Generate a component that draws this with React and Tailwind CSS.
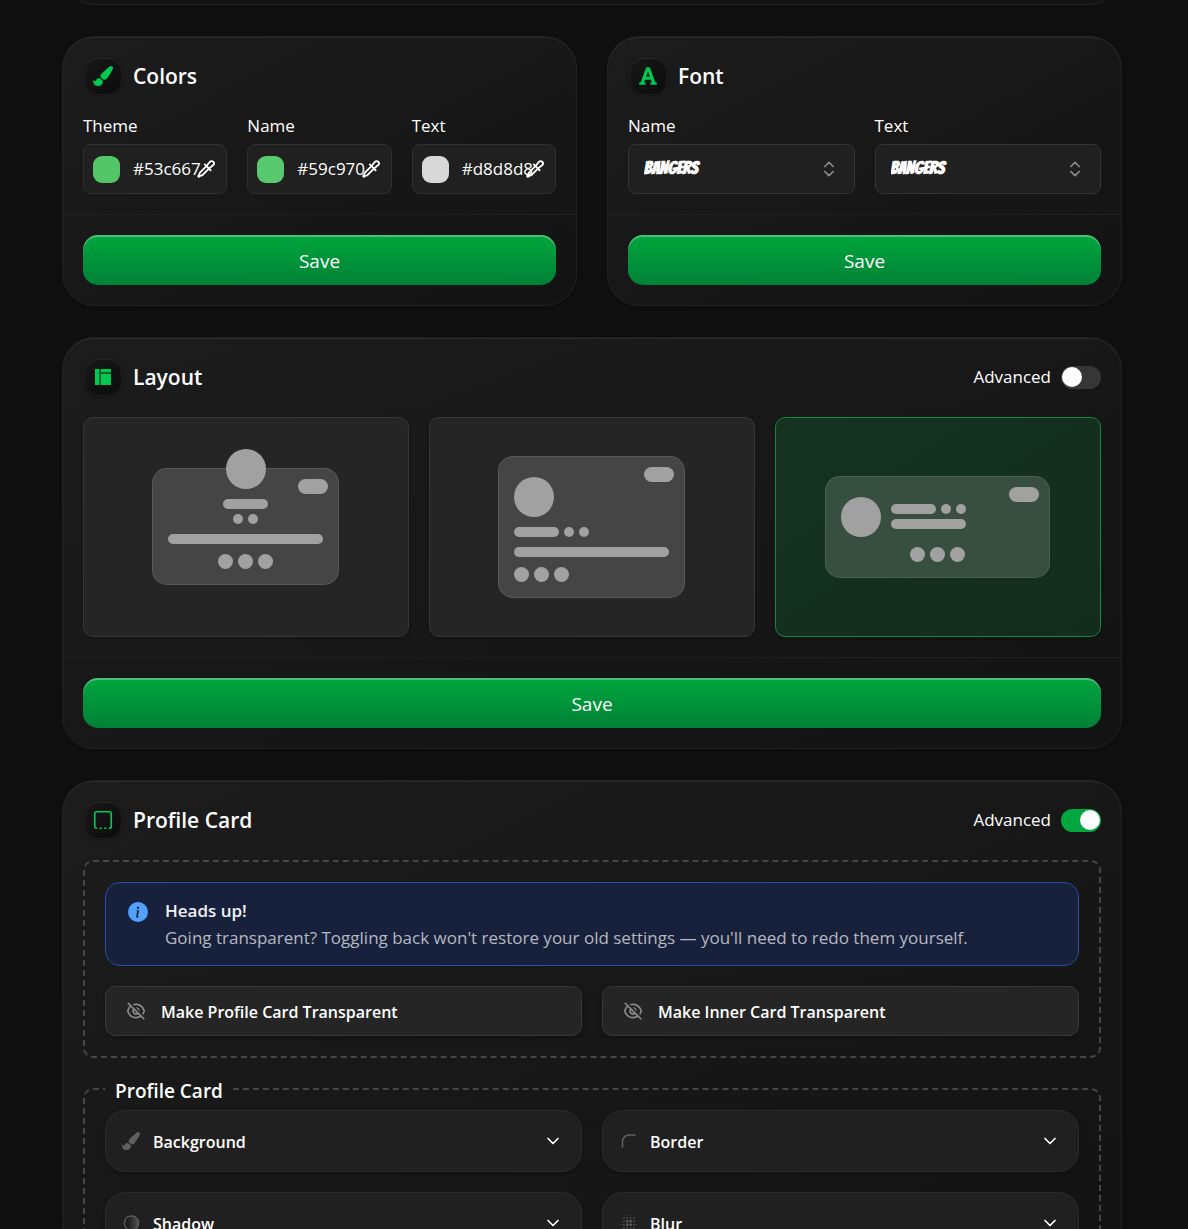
import { useState } from "react";
import { ChevronDown, ChevronsUpDown, SquareDashedBottom } from "lucide-react";
import { FaPaintBrush, FaFont } from "react-icons/fa";
import { BsInfoCircleFill } from "react-icons/bs";
import { MdBlurOn } from "react-icons/md";
import { RiEyeOffLine } from "react-icons/ri";

function LayoutIcon() {
  return (
    <svg width="16" height="16" viewBox="0 0 16 16" fill="currentColor" aria-hidden="true">
      <rect width="16" height="16" opacity="0.45" />
      <rect width="4" height="16" />
      <rect x="6" width="10" height="3" />
      <rect x="6" y="5" width="10" height="11" />
    </svg>
  );
}

function EyedropperIcon() {
  return (
    <svg
      width="20"
      height="20"
      viewBox="0 0 24 24"
      fill="none"
      stroke="currentColor"
      strokeWidth="2.2"
      strokeLinecap="round"
      strokeLinejoin="round"
      aria-hidden="true"
    >
      <path d="M12.500 8.500 5 16c-1 1-.8 2-1.200 3L2.500 20.500l1 1L5 20.200c1-.4 2-.2 3-1.200l7.500-7.500" />
      <path d="M10.500 6.500l7 7" />
      <path d="M12.500 8.500l4.300-5.200a2.700 2.700 0 0 1 3.900 3.900l-5.200 4.300" />
    </svg>
  );
}

function CornerIcon() {
  return (
    <svg width="18" height="18" viewBox="0 0 18 18" fill="none" stroke="currentColor" strokeWidth="1.5" aria-hidden="true">
      <path d="M3.500 15.500v-6a6.500 6.500 0 0 1 6.500-6.500h6.500" />
    </svg>
  );
}

function ShadowIcon() {
  return (
    <svg width="18" height="18" viewBox="0 0 18 18" aria-hidden="true">
      <defs>
        <linearGradient id="shade" x1="0" x2="1">
          <stop offset="0.3" stopColor="currentColor" stopOpacity="0" />
          <stop offset="1" stopColor="currentColor" stopOpacity="0.8" />
        </linearGradient>
      </defs>
      <circle cx="9.500" cy="9" r="7.2" fill="url(#shade)" stroke="currentColor" strokeWidth="1.2" />
    </svg>
  );
}

function Panel({ icon, title, advanced, children, footer }) {
  return (
    <section className="rounded-[32px] border border-[#222222] bg-linear-to-br from-[#1c1c1c] to-[#131313] shadow-[inset_0_1px_1px_rgba(255,255,255,0.08),0_2px_6px_rgba(0,0,0,0.3)]">
      <div className="p-5">
        <header className="flex h-[39px] items-start justify-between">
          <div className="flex items-center gap-[11px] pl-px">
            <span className="flex size-[38px] items-center justify-center rounded-[14px] border border-[#1e1e1e] bg-linear-to-br from-[#191919] to-[#0b0b0b] text-[#00c951] shadow-[inset_0_1px_1px_rgba(255,255,255,0.08),0_1px_3px_rgba(0,0,0,0.3)]">
              {icon}
            </span>
            <h2 className="text-[21px] leading-8 font-semibold">{title}</h2>
          </div>
          {advanced !== undefined && <Toggle initial={advanced} />}
        </header>
        {children}
      </div>
      {footer && (
        <div className="border-t border-[#202020] p-5">
          <button
            type="button"
            className="h-[50px] w-full rounded-[15px] bg-linear-to-b from-[#00a63e] to-[#008236] pt-0.5 text-[19px] font-medium shadow-[inset_0_2px_0_rgba(255,255,255,0.3)]"
          >
            Save
          </button>
        </div>
      )}
    </section>
  );
}

function Toggle({ initial }) {
  const [on, setOn] = useState(initial);
  return (
    <label className="flex h-[38px] items-center gap-2.5 text-[17px]">
      Advanced
      <input
        type="checkbox"
        role="switch"
        checked={on}
        onChange={(e) => setOn(e.target.checked)}
        className="flex h-[23px] w-10 appearance-none items-center rounded-full bg-[#363636] px-px before:size-5 before:rounded-full before:bg-white checked:justify-end checked:bg-[#00a63e]"
      />
    </label>
  );
}

function ColorField({ id, label, value, swatch }) {
  return (
    <div className="min-w-0 flex-1">
      <label htmlFor={id} className="block text-[17px] leading-[26px]">
        {label}
      </label>
      <div className="relative mt-[5px] flex h-[50px] items-center gap-[13px] rounded-lg border border-[#303030] bg-[#202020] pl-[9px]">
        <button type="button" aria-label={`Pick ${label} color`} className={`size-[27px] shrink-0 rounded-[9px] ${swatch}`} />
        <input id={id} type="text" defaultValue={value} className="w-full min-w-0 bg-transparent text-[17px] outline-none" />
        <button type="button" aria-label={`Sample ${label} color`} className="absolute right-2.5">
          <EyedropperIcon />
        </button>
      </div>
    </div>
  );
}

function FontField({ id, label }) {
  return (
    <div className="min-w-0 flex-1">
      <label htmlFor={id} className="block text-[17px] leading-[26px]">
        {label}
      </label>
      <div className="relative mt-[5px] flex items-center">
        <select
          id={id}
          className="h-[50px] w-full appearance-none rounded-lg border border-[#343434] bg-[#202020] px-[15px] pb-1 font-['Bangers','Liberation_Sans_Narrow','Roboto',sans-serif] text-[18px] font-bold"
        >
          <option>BANGERS</option>
        </select>
        <ChevronsUpDown size={20} className="pointer-events-none absolute right-4 text-[#8c8c8c]" />
      </div>
    </div>
  );
}

function Bar({ className }) {
  return <span className={`block shrink-0 rounded-full bg-[#a1a1a1] ${className}`} />;
}

function Trio() {
  return (
    <span className="flex gap-[5px]">
      <Bar className="size-[15px]" />
      <Bar className="size-[15px]" />
      <Bar className="size-[15px]" />
    </span>
  );
}

function Duo() {
  return (
    <span className="flex gap-[5px]">
      <Bar className="size-2.5" />
      <Bar className="size-2.5" />
    </span>
  );
}

function LayoutOption({ label, selected, onSelect, width, children }) {
  return (
    <button
      type="button"
      aria-label={label}
      aria-pressed={selected}
      onClick={onSelect}
      className={`flex h-[220px] min-w-0 flex-1 items-center justify-center rounded-[10px] border pr-px pb-px shadow-[0_1px_3px_rgba(0,0,0,0.3)] ${
        selected ? "border-[#0c8a3e] bg-linear-to-br from-[#153320] to-[#132c1e]" : "border-[#373737] bg-[#252525]"
      }`}
    >
      <span className={`relative flex flex-col rounded-[15px] border border-white/10 bg-white/15 p-[15px] ${width}`}>
        <Bar className="absolute top-2.5 right-2.5 h-[15px] w-[30px]" />
        {children}
      </span>
    </button>
  );
}

function TransparentButton({ children }) {
  return (
    <button
      type="button"
      className="flex h-[50px] items-center gap-[15px] rounded-[10px] border border-[#383838] bg-[#252525] px-5 text-[16px] font-semibold shadow-[0_2px_4px_rgba(0,0,0,0.3)]"
    >
      <RiEyeOffLine size={20} className="text-[#8c8c8c]" />
      <span className="pt-0.5">{children}</span>
    </button>
  );
}

function Accordion({ icon, title }) {
  return (
    <button
      type="button"
      aria-expanded="false"
      className="flex h-[62px] items-center rounded-[20px] border border-[#2b2b2b] bg-[#202020] pr-[18px] pl-4 text-[16px] font-semibold shadow-[0_2px_4px_rgba(0,0,0,0.3)]"
    >
      <span className="flex w-[31px] text-[#606060]">{icon}</span>
      <span className="pt-0.5">{title}</span>
      <ChevronDown size={20} className="ml-auto" />
    </button>
  );
}

export default function App() {
  const [layout, setLayout] = useState(2);
  return (
    <main className="h-screen overflow-hidden bg-[#101010] pr-[66px] pl-[62px] font-['Segoe_UI','Open_Sans','Noto_Sans',sans-serif] text-white">
      <div className="flex flex-col gap-[31px]">
        <div className="flex h-[5px] items-end overflow-hidden">
          <div className="h-16 w-full rounded-[32px] border border-[#222222] bg-[#141414]" />
        </div>

        <div className="grid grid-cols-2 gap-[30px]">
          <Panel icon={<FaPaintBrush size={20} />} title="Colors" footer>
            <div className="mt-[17px] flex gap-5">
              <ColorField id="theme-color" label="Theme" value="#53c667" swatch="bg-[#53c667]" />
              <ColorField id="name-color" label="Name" value="#59c970" swatch="bg-[#59c970]" />
              <ColorField id="text-color" label="Text" value="#d8d8d8" swatch="bg-[#d8d8d8]" />
            </div>
          </Panel>
          <Panel icon={<FaFont size={20} />} title="Font" footer>
            <div className="mt-[17px] flex gap-5">
              <FontField id="name-font" label="Name" />
              <FontField id="text-font" label="Text" />
            </div>
          </Panel>
        </div>

        <Panel icon={<LayoutIcon />} title="Layout" advanced={false} footer>
          <div className="mt-5 flex gap-5">
            <LayoutOption label="Centered" selected={layout === 0} onSelect={() => setLayout(0)} width="w-[187px] items-center">
              <Bar className="-mt-[35px] size-10" />
              <Bar className="mt-2.5 mb-[5px] h-2.5 w-[45px]" />
              <Duo />
              <Bar className="my-2.5 h-2.5 w-full" />
              <Trio />
            </LayoutOption>
            <LayoutOption label="Left aligned" selected={layout === 1} onSelect={() => setLayout(1)} width="w-[187px]">
              <Bar className="mt-[5px] size-10" />
              <span className="mt-2.5 flex gap-[5px]">
                <Bar className="h-2.5 w-[45px]" />
                <Duo />
              </span>
              <Bar className="my-2.5 h-2.5 w-full" />
              <Trio />
            </LayoutOption>
            <LayoutOption label="Horizontal" selected={layout === 2} onSelect={() => setLayout(2)} width="w-[225px] items-center">
              <span className="mt-[5px] mb-2.5 flex items-center gap-2.5 self-stretch">
                <Bar className="size-10" />
                <span className="flex flex-col gap-[5px]">
                  <span className="flex gap-[5px]">
                    <Bar className="h-2.5 w-[45px]" />
                    <Duo />
                  </span>
                  <Bar className="h-2.5 w-[75px]" />
                </span>
              </span>
              <Trio />
            </LayoutOption>
          </div>
        </Panel>

        <Panel icon={<SquareDashedBottom size={22} strokeWidth={1.8} />} title="Profile Card" advanced={true}>
          <div className="mt-5 rounded-[10px] border-2 border-dashed border-[#464646] p-5">
            <div role="note" className="flex gap-[17px] rounded-[15px] border border-[#2451a3] bg-[#18213c] px-[22px] py-3.5">
              <BsInfoCircleFill size={20} className="mt-[5px] shrink-0 text-[#51a2ff]" />
              <div className="text-[17px] leading-[27px]">
                <p className="font-semibold text-[#f0f1f4]">Heads up!</p>
                <p className="text-[#b5b8c0]">
                  Going transparent? Toggling back won't restore your old settings — you'll need to redo them yourself.
                </p>
              </div>
            </div>
            <div className="mt-5 grid grid-cols-2 gap-5">
              <TransparentButton>Make Profile Card Transparent</TransparentButton>
              <TransparentButton>Make Inner Card Transparent</TransparentButton>
            </div>
          </div>

          <fieldset className="mt-5 rounded-[10px] border-2 border-dashed border-[#464646] px-5 pt-2.5 pb-5">
            <legend className="px-2.5 pt-1 text-[19px] leading-[18px] font-semibold">Profile Card</legend>
            <div className="grid grid-cols-2 gap-5">
              <Accordion icon={<FaPaintBrush size={18} />} title="Background" />
              <Accordion icon={<CornerIcon />} title="Border" />
              <Accordion icon={<ShadowIcon />} title="Shadow" />
              <Accordion icon={<MdBlurOn size={20} />} title="Blur" />
            </div>
          </fieldset>
        </Panel>
      </div>
    </main>
  );
}
